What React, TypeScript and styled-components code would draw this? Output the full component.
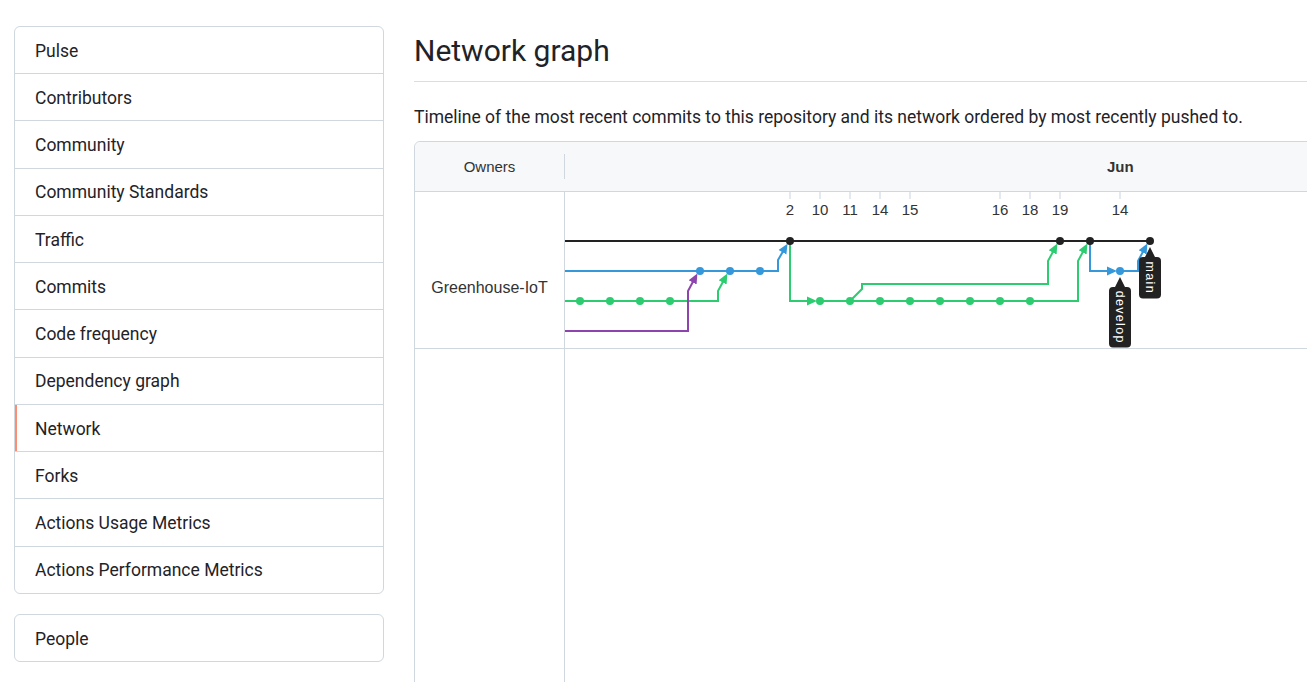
import styled, { createGlobalStyle } from 'styled-components';

const GlobalStyle = createGlobalStyle`
    html, body {
        margin: 0;
        padding: 0;
        overflow: hidden;
        background: #ffffff;
    }
    body {
        font-family: Roboto, 'Noto Sans', sans-serif;
        color: #1f2328;
    }
`;

const menuItems = [
    'Pulse',
    'Contributors',
    'Community',
    'Community Standards',
    'Traffic',
    'Commits',
    'Code frequency',
    'Dependency graph',
    'Network',
    'Forks',
    'Actions Usage Metrics',
    'Actions Performance Metrics',
];

// graph coordinates are relative to the canvas cell (x = 565, y = 192 on the page)
const ticks = [
    { x: 225, label: '2' },
    { x: 255, label: '10' },
    { x: 285, label: '11' },
    { x: 315, label: '14' },
    { x: 345, label: '15' },
    { x: 435, label: '16' },
    { x: 465, label: '18' },
    { x: 495, label: '19' },
    { x: 555, label: '14' },
];

const COLORS = {
    black: '#222222',
    blue: '#3498db',
    green: '#2ecc71',
    purple: '#8e44ad',
};

type Lane = keyof typeof COLORS;

const branches: { lane: Lane; d: string; arrow?: boolean }[] = [
    { lane: 'black', d: 'M0 49 H585' },
    { lane: 'blue', d: 'M0 79 H213 V68 L220 56', arrow: true },
    { lane: 'green', d: 'M0 109 H153 V99 L160 86', arrow: true },
    { lane: 'purple', d: 'M0 139 H123 V99 L130 86', arrow: true },
    { lane: 'green', d: 'M225 49 V109 H247', arrow: true },
    { lane: 'green', d: 'M255 109 H513 V69 L520 56', arrow: true },
    { lane: 'green', d: 'M285 109 L297 97 V92 H483 V69 L490 56', arrow: true },
    { lane: 'blue', d: 'M525 49 V79 H547', arrow: true },
    { lane: 'blue', d: 'M555 79 H573 V69 L580 56', arrow: true },
];

const commits: { lane: Lane; x: number; y: number }[] = [
    ...[225, 495, 525, 585].map((x) => ({ lane: 'black' as Lane, x, y: 49 })),
    ...[135, 165, 195, 555].map((x) => ({ lane: 'blue' as Lane, x, y: 79 })),
    ...[15, 45, 75, 105, 255, 285, 315, 345, 375, 405, 435, 465].map((x) => ({
        lane: 'green' as Lane,
        x,
        y: 109,
    })),
];

const tags = [
    { name: 'develop', cx: 555, tip: 85, bottom: 155.5 },
    { name: 'main', cx: 585, tip: 55, bottom: 106.5 },
];

const tagPath = (cx: number, tip: number, bottom: number) => {
    const w = 11;
    const r = 4;
    const top = tip + 10;
    return `M${cx} ${tip} L${cx + 5} ${top} H${cx + w - r} Q${cx + w} ${top} ${cx + w} ${top + r} V${bottom - r} Q${cx + w} ${bottom} ${cx + w - r} ${bottom} H${cx - w + r} Q${cx - w} ${bottom} ${cx - w} ${bottom - r} V${top + r} Q${cx - w} ${top} ${cx - w + r} ${top} H${cx - 5} Z`;
};

const NetworkCanvas = () => (
    <GraphSvg width={742} height={156} viewBox="0 0 742 156">
        <defs>
            {(Object.keys(COLORS) as Lane[]).map((lane) => (
                <marker
                    key={lane}
                    id={`arrow-${lane}`}
                    markerUnits="userSpaceOnUse"
                    markerWidth={10}
                    markerHeight={10}
                    refX={5}
                    refY={5}
                    orient="auto"
                >
                    <path d="M0 0.5 L10 5 L0 9.5 Z" fill={COLORS[lane]} />
                </marker>
            ))}
        </defs>
        {ticks.map((t, i) => (
            <g key={i}>
                <line x1={t.x} y1={0} x2={t.x} y2={7} stroke="#c9d3df" strokeWidth={1} />
                <TickLabel x={t.x} y={23} textAnchor="middle">
                    {t.label}
                </TickLabel>
            </g>
        ))}
        {branches.map((b, i) => (
            <path
                key={i}
                d={b.d}
                fill="none"
                stroke={COLORS[b.lane]}
                strokeWidth={2}
                markerEnd={b.arrow ? `url(#arrow-${b.lane})` : undefined}
            />
        ))}
        {commits.map((c, i) => (
            <circle key={i} cx={c.x} cy={c.y} r={4} fill={COLORS[c.lane]} />
        ))}
        {tags.map((t) => (
            <g key={t.name}>
                <path d={tagPath(t.cx, t.tip, t.bottom)} fill="#222222" />
                <TagText
                    transform={`translate(${t.cx} ${(t.tip + 10 + t.bottom) / 2}) rotate(90)`}
                    textAnchor="middle"
                    dominantBaseline="central"
                >
                    {t.name}
                </TagText>
            </g>
        ))}
    </GraphSvg>
);

const App = () => {
    return (
        <>
            <GlobalStyle />
            <Page>
                <Sidebar>
                    <Menu>
                        {menuItems.map((item) => (
                            <MenuItem key={item} $active={item === 'Network'}>
                                {item}
                            </MenuItem>
                        ))}
                    </Menu>
                    <Menu>
                        <MenuItem>People</MenuItem>
                    </Menu>
                </Sidebar>
                <Main>
                    <Heading>Network graph</Heading>
                    <Description>
                        Timeline of the most recent commits to this repository and its network ordered by most
                        recently pushed to.
                    </Description>
                    <GraphFrame>
                        <GraphHeader>
                            <OwnersHead>Owners</OwnersHead>
                            <MonthHead $offset={542}>Jun</MonthHead>
                        </GraphHeader>
                        <GraphBody>
                            <OwnerCell>Greenhouse-IoT</OwnerCell>
                            <CanvasCell>
                                <NetworkCanvas />
                            </CanvasCell>
                            <OwnerFiller />
                            <div />
                        </GraphBody>
                    </GraphFrame>
                </Main>
            </Page>
        </>
    );
};

const Page = styled.div`
    display: flex;
    align-items: flex-start;
    gap: 30px;
    padding: 26px 0 0 14px;
    width: 100vw;
    height: 100vh;
    box-sizing: border-box;
    overflow: hidden;
`;

const Sidebar = styled.aside`
    flex: none;
    width: 370px;
    display: flex;
    flex-direction: column;
    gap: 20px;
`;

const Menu = styled.nav`
    border: 1px solid #d0d7de;
    border-radius: 6px;
    overflow: hidden;
    display: flex;
    flex-direction: column;
`;

const MenuItem = styled.a<{ $active?: boolean }>`
    display: block;
    padding: 10.7px 20px 9.3px;
    font-size: 17.5px;
    line-height: 26.25px;
    color: #1f2328;
    text-decoration: none;
    border-bottom: 1px solid #d0d7de;
    box-shadow: ${(props) => (props.$active ? 'inset 2px 0 0 #fd8c73' : 'none')};
    cursor: pointer;
    &:last-child {
        border-bottom: none;
    }
`;

const Main = styled.main`
    flex: none;
    width: 1000px;
`;

const Heading = styled.h2`
    margin: 0;
    padding: 2px 0 8px;
    font-size: 30px;
    line-height: 45px;
    font-weight: 400;
    border-bottom: 1px solid #d8dee4;
`;

const Description = styled.p`
    margin: 22px 0 11px;
    font-size: 17.5px;
    line-height: 26.25px;
`;

const GraphFrame = styled.div`
    border: 1px solid #d0d7de;
    border-radius: 6px 6px 0 0;
    display: flex;
    flex-direction: column;
    min-height: 600px;
    font-family: 'Liberation Sans', Arial, sans-serif;
    color: #333333;
`;

const GraphHeader = styled.div`
    display: grid;
    grid-template-columns: 150px 1fr;
    align-items: center;
    height: 49px;
    background: #f6f8fa;
    border-bottom: 1px solid #d0d7de;
    border-radius: 6px 6px 0 0;
    font-size: 15px;
`;

const OwnersHead = styled.div`
    height: 25px;
    display: flex;
    align-items: center;
    justify-content: center;
    border-right: 1px solid #d0d7de;
    box-sizing: border-box;
`;

const MonthHead = styled.div<{ $offset: number }>`
    padding-left: ${(props) => props.$offset}px;
    font-weight: 700;
`;

const GraphBody = styled.div`
    flex: 1;
    display: grid;
    grid-template-columns: 150px 1fr;
    grid-template-rows: 157px 1fr;
`;

const OwnerCell = styled.div`
    padding-top: 87px;
    box-sizing: border-box;
    text-align: center;
    font-size: 16px;
    border-right: 1px solid #d0d7de;
    border-bottom: 1px solid #d0d7de;
`;

const CanvasCell = styled.div`
    border-bottom: 1px solid #d0d7de;
    overflow: hidden;
`;

const OwnerFiller = styled.div`
    border-right: 1px solid #d0d7de;
`;

const GraphSvg = styled.svg`
    display: block;
`;

const TickLabel = styled.text`
    font-family: 'Liberation Sans', Arial, sans-serif;
    font-size: 15px;
    fill: #333333;
`;

const TagText = styled.text`
    font-family: 'Liberation Sans', Arial, sans-serif;
    font-size: 12.5px;
    letter-spacing: 1.3px;
    fill: #ffffff;
`;

export default App;
